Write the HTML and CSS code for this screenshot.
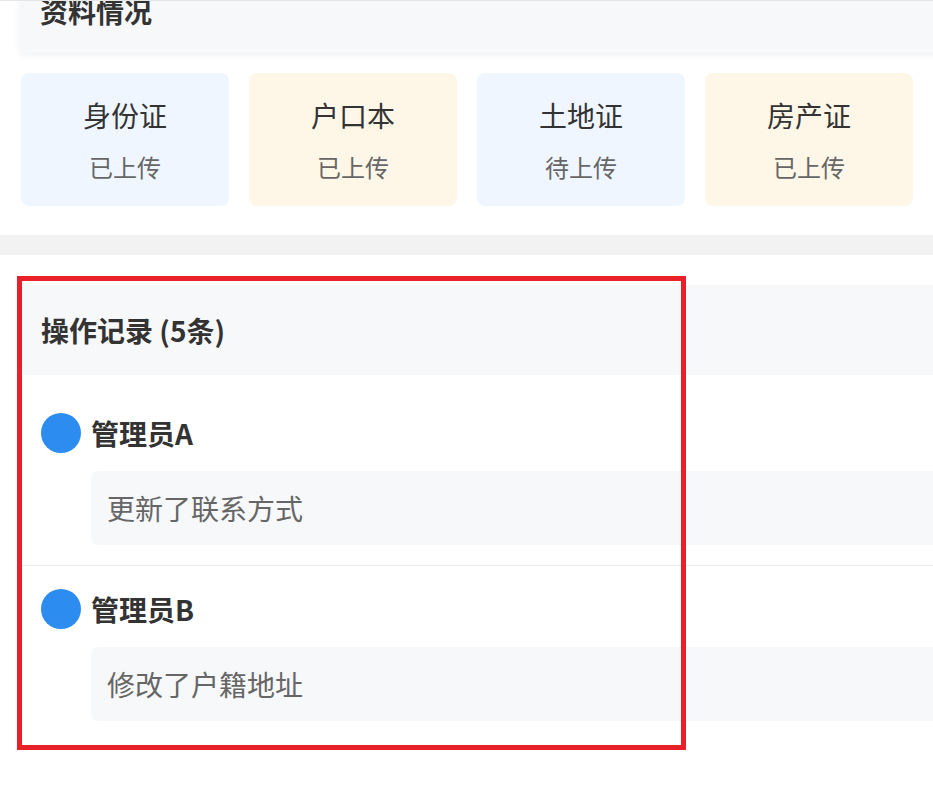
FILE: index.html
```html
<!DOCTYPE html>
<html lang="zh-CN">
<head>
  <meta charset="UTF-8" />
  <meta name="viewport" content="width=device-width, initial-scale=1" />
  <title>资料详情</title>
  <link rel="stylesheet" href="styles.css">
</head>
<body>
<div class="page">
  <div class="bloc-titre">资料情况</div>
  <div class="cartes">
    <div class="carte bleu">
      <div class="carte-nom">身份证</div>
      <div class="carte-etat">已上传</div>
    </div>
    <div class="carte jaune">
      <div class="carte-nom">户口本</div>
      <div class="carte-etat">已上传</div>
    </div>
    <div class="carte bleu">
      <div class="carte-nom">土地证</div>
      <div class="carte-etat">待上传</div>
    </div>
    <div class="carte jaune">
      <div class="carte-nom">房产证</div>
      <div class="carte-etat">已上传</div>
    </div>
  </div>
</div>
<div class="separateur"></div>
<div class="page">
  <div class="historique">
    <div class="bloc-titre">操作记录 (5条)</div>
    <div class="liste">
      <div class="ligne">
        <div class="auteur">
          <span class="point"></span>
          <span class="nom">管理员A</span>
        </div>
        <div class="action">更新了联系方式</div>
      </div>
      <div class="ligne">
        <div class="auteur">
          <span class="point"></span>
          <span class="nom">管理员B</span>
        </div>
        <div class="action">修改了户籍地址</div>
      </div>
    </div>
  </div>
</div>
<!-- cadre de surlignage -->
<div class="surligne"></div>
</body>
</html>
```

FILE: styles.css
```css
html {
  overflow: hidden;
}
body {
  margin: 0;
  background: #fff;
  color: #333;
  font-family: "Noto Sans CJK SC", "Noto Sans", sans-serif;
  border-top: 1px solid #e6e6e6;
}
.page {
  width: 1000px;
  padding-left: 20px;
}
.bloc-titre {
  background: #f7f8fa;
  padding-left: 21px;
  height: 90px;
  line-height: 90px;
  font-size: 28px;
  font-weight: bold;
  color: #333;
}
.page > .bloc-titre {
  margin-top: -33px;
  height: 85px;
  line-height: 86px;
  padding-left: 20px;
  box-shadow: 0 3px 8px rgba(0,0,0,0.05);
}
.cartes {
  display: flex;
  gap: 20px;
  padding: 20px 0 0 1px;
}
.carte {
  width: 208px;
  height: 133px;
  box-sizing: border-box;
  border-radius: 8px;
  padding-top: 24px;
  text-align: center;
}
.carte.bleu {
  background: #eff6ff;
}
.carte.jaune {
  background: #fef7e8;
}
.carte-nom {
  font-size: 28px;
  line-height: 36px;
  color: #333;
}
.carte-etat {
  margin-top: 19px;
  font-size: 24px;
  line-height: 30px;
  color: #666;
}
.separateur {
  height: 20px;
  background: #f2f2f2;
  margin: 29px 0 30px;
}
.liste {
  margin-top: 15px;
}
.ligne {
  padding: 23px 0 20px;
  border-bottom: 1px solid #ececec;
}
.ligne:last-child {
  border-bottom: none;
}
.auteur {
  display: flex;
  align-items: center;
  gap: 10px;
  padding-left: 21px;
  height: 40px;
}
.point {
  width: 40px;
  height: 40px;
  border-radius: 50%;
  background: #2d8cf0;
}
.nom {
  font-size: 28px;
  line-height: 40px;
  font-weight: bold;
  color: #333;
}
.action {
  margin: 18px 0 0 71px;
  height: 74px;
  line-height: 74px;
  padding-left: 16px;
  background: #f7f8fa;
  border-radius: 8px;
  font-size: 28px;
  color: #666;
}
.surligne {
  position: absolute;
  left: 17px;
  top: 276px;
  width: 669px;
  height: 474px;
  box-sizing: border-box;
  border: 5px solid #e8202a;
}
```
